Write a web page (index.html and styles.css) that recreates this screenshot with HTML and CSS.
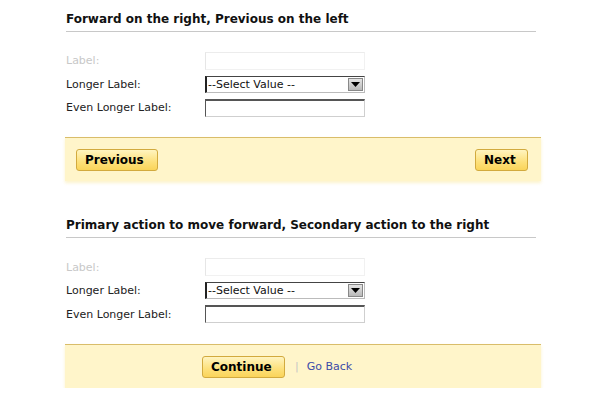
FILE: index.html
```html
<!DOCTYPE html>
<html>
<head>
<meta charset="utf-8">
<link rel="stylesheet" href="styles.css">
</head>
<body>
<div class="page">
  <section class="section">
    <h2 class="title">Forward on the right, Previous on the left</h2>
    <div class="form">
      <div class="row disabled">
        <span class="label">Label:</span>
        <span class="input faint"></span>
      </div>
      <div class="row">
        <span class="label">Longer Label:</span>
        <span class="select"><span class="sel-text">--Select Value --</span><span class="arrow"><svg width="9" height="5" viewBox="0 0 9 5"><path d="M0 0H9L4.5 5Z" fill="#000"/></svg></span></span>
      </div>
      <div class="row">
        <span class="label">Even Longer Label:</span>
        <span class="input"></span>
      </div>
    </div>
    <div class="bar bar-split">
      <button class="btn btn-prev">Previous</button>
      <button class="btn btn-next">Next</button>
    </div>
  </section>
  <section class="section second">
    <h2 class="title">Primary action to move forward, Secondary action to the right</h2>
    <div class="form form2">
      <div class="row disabled">
        <span class="label">Label:</span>
        <span class="input faint"></span>
      </div>
      <div class="row">
        <span class="label">Longer Label:</span>
        <span class="select"><span class="sel-text">--Select Value --</span><span class="arrow"><svg width="9" height="5" viewBox="0 0 9 5"><path d="M0 0H9L4.5 5Z" fill="#000"/></svg></span></span>
      </div>
      <div class="row">
        <span class="label">Even Longer Label:</span>
        <span class="input"></span>
      </div>
    </div>
    <div class="bar bar-primary">
      <button class="btn btn-continue">Continue</button>
      <span class="sep">|</span>
      <a class="link" href="#">Go Back</a>
    </div>
  </section>
</div>
</body>
</html>
```
FILE: styles.css
```css
html, body {
  margin: 0;
  padding: 0;
  background: #fff;
}
body {
  font-family: "DejaVu Sans", Verdana, sans-serif;
  color: #111;
}
.page {
  width: 476px;
  margin-left: 65px;
  padding-top: 11px;
}
.section {
  display: flex;
  flex-direction: column;
}
.second {
  margin-top: 36px;
}
.title {
  margin: 0 5px 0 1px;
  font-size: 12px;
  font-weight: bold;
  line-height: 16px;
  padding-bottom: 4px;
  border-bottom: 1px solid #c8c8c8;
  color: #111;
}
.form {
  display: flex;
  flex-direction: column;
  gap: 6px;
  padding-top: 20px;
  padding-left: 1px;
}
.form2 {
  padding-top: 21px;
}
.row {
  display: flex;
  align-items: center;
  height: 17.5px;
  font-size: 11px;
}
.label {
  width: 139px;
  color: #222;
}
.disabled .label {
  color: #c8c8c8;
}
.input {
  box-sizing: border-box;
  width: 160px;
  height: 18px;
  border: 1px solid #cfcfcf;
  border-top: 2px solid #555;
  border-left: 1px solid #555;
  background: #fff;
}
.input.faint {
  border: 1px solid #f1f1f1;
  border-top-color: #ececec;
  border-left-color: #e6e6e6;
}
.select {
  box-sizing: border-box;
  width: 160px;
  height: 17px;
  display: flex;
  align-items: center;
  justify-content: space-between;
  border: 1px solid #bbb;
  border-top-color: #444;
  border-left: 2px solid #222;
  background: #fff;
  font-size: 11px;
  color: #111;
}
.sel-text {
  padding-left: 1px;
}
.arrow {
  width: 15px;
  height: 13px;
  margin-right: 1px;
  display: flex;
  align-items: center;
  justify-content: center;
  background: linear-gradient(#e4e4e4, #b9b9b9);
  border: 1px solid #888;
  box-sizing: border-box;
}
.bar {
  margin-top: 20px;
  height: 44px;
  box-sizing: border-box;
  background: #fff5ca;
  border-top: 1px solid #d9bd6a;
  box-shadow: 0 2px 3px rgba(250, 235, 170, 0.6);
  display: flex;
  align-items: center;
  padding: 0 13px 0 11px;
}
.bar-split {
  justify-content: space-between;
}
.bar-primary {
  padding-left: 137px;
  margin-top: 21px;
}
.btn {
  font-family: "DejaVu Sans", Verdana, sans-serif;
  font-weight: bold;
  font-size: 12px;
  color: #000;
  height: 22px;
  box-sizing: border-box;
  border: 1px solid #d2aa3e;
  border-radius: 3px;
  background: linear-gradient(#fff4c0, #fde07a 60%, #fad45a);
  padding: 0 0 0 8px;
  text-align: left;
  line-height: 20px;
  margin-top: 1px;
}
.btn-prev {
  width: 82px;
}
.btn-next {
  width: 53px;
}
.btn-continue {
  width: 83px;
}
.sep {
  color: #c6c6c6;
  font-size: 11px;
  margin-left: 10px;
  margin-right: 8px;
}
.link {
  color: #3b4ba8;
  font-size: 11px;
  text-decoration: none;
}
```
